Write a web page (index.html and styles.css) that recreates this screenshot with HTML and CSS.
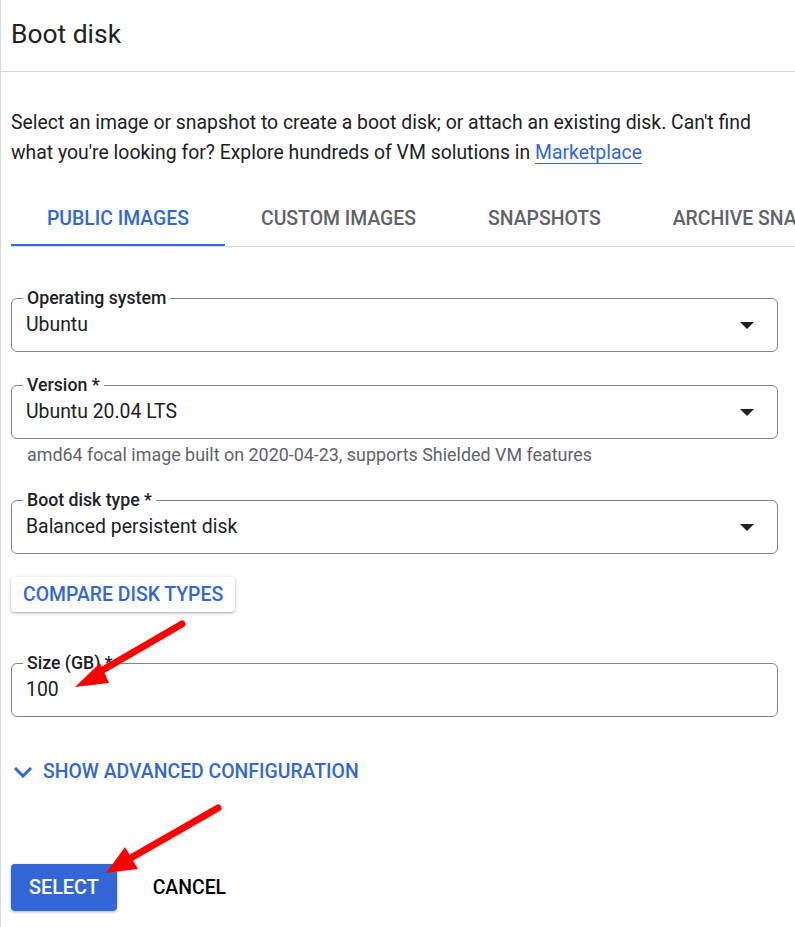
FILE: index.html
```html
<!DOCTYPE html>
<html lang="en">
<head>
<meta charset="utf-8">
<title>Boot disk</title>
<link rel="stylesheet" href="styles.css">
</head>
<body>
<div class="page">
  <header class="header">
    <h1 class="title">Boot disk</h1>
  </header>
  <main class="content">
    <p class="intro">Select an image or snapshot to create a boot disk; or attach an existing disk. Can't find what you're looking for? Explore hundreds of VM solutions in <a class="link" href="#">Marketplace</a></p>

    <nav class="tabs">
      <div class="tab active">PUBLIC IMAGES</div>
      <div class="tab">CUSTOM IMAGES</div>
      <div class="tab">SNAPSHOTS</div>
      <div class="tab">ARCHIVE SNAPSHOTS</div>
      <div class="tab">EXISTING DISKS</div>
    </nav>

    <fieldset class="field field-first">
      <legend class="field-label">Operating system</legend>
      <div class="field-row">
        <span class="field-value">Ubuntu</span>
        <svg class="caret" width="14" height="7" viewBox="0 0 14 7"><path d="M0 0H14L7 7Z" fill="#202124"/></svg>
      </div>
    </fieldset>

    <fieldset class="field field-gap">
      <legend class="field-label">Version *</legend>
      <div class="field-row">
        <span class="field-value">Ubuntu 20.04 LTS</span>
        <svg class="caret" width="14" height="7" viewBox="0 0 14 7"><path d="M0 0H14L7 7Z" fill="#202124"/></svg>
      </div>
    </fieldset>
    <div class="hint">amd64 focal image built on 2020-04-23, supports Shielded VM features</div>

    <fieldset class="field field-after-hint">
      <legend class="field-label">Boot disk type *</legend>
      <div class="field-row">
        <span class="field-value">Balanced persistent disk</span>
        <svg class="caret" width="14" height="7" viewBox="0 0 14 7"><path d="M0 0H14L7 7Z" fill="#202124"/></svg>
      </div>
    </fieldset>

    <div class="raised-row">
      <button class="btn-raised">COMPARE DISK TYPES</button>
    </div>

    <fieldset class="field field-size">
      <legend class="field-label">Size (GB) *</legend>
      <div class="field-row">
        <span class="field-value">100</span>
      </div>
    </fieldset>

    <div class="advanced">
      <svg class="chevron" width="20" height="12" viewBox="0 0 20 12"><path d="M2 2L10 10L18 2" fill="none" stroke="#3367d6" stroke-width="3"/></svg>
      <span>SHOW ADVANCED CONFIGURATION</span>
    </div>

    <div class="actions">
      <button class="btn-primary">SELECT</button>
      <button class="btn-text">CANCEL</button>
    </div>
  </main>

  <svg class="annotations" width="795" height="927" viewBox="0 0 795 927">
    <line x1="181" y1="624" x2="100" y2="671" stroke="#ff0000" stroke-width="7" stroke-linecap="round"/>
    <polygon points="74,687 99,663 108,683" fill="#ff0000"/>
    <line x1="217" y1="808" x2="128" y2="859" stroke="#ff0000" stroke-width="7" stroke-linecap="round"/>
    <polygon points="105,873 124,847 137,869" fill="#ff0000"/>
  </svg>
</div>
</body>
</html>
```

FILE: styles.css
```css
* { box-sizing: border-box; }

html, body {
  margin: 0;
  padding: 0;
  background: #ffffff;
}

body {
  font-family: Roboto, "Liberation Sans", Arial, sans-serif;
  color: #202124;
}

.page {
  position: relative;
  width: 795px;
  height: 927px;
  overflow: hidden;
  border-left: 1px solid #dadce0;
}

.header {
  padding: 18px 0 21px 10px;
  border-bottom: 1px solid #dadce0;
}

.title {
  margin: 0;
  font-size: 26.4px;
  line-height: 32px;
  font-weight: 400;
  color: #202124;
}

.content {
  padding-left: 10px;
}

.intro {
  margin: 36px 17px 0 0;
  font-size: 19.4px;
  line-height: 30px;
  color: #202124;
}

.link {
  color: #3367d6;
  text-decoration: underline;
  text-underline-offset: 4px;
  text-decoration-thickness: 1px;
}

.tabs {
  display: flex;
  margin-top: 28px;
  white-space: nowrap;
  overflow: hidden;
  border-bottom: 1px solid #dadce0;
}

.tab {
  flex: none;
  padding: 11px 36px 13px;
  font-size: 19.4px;
  line-height: 24px;
  font-weight: 500;
  color: #5f6368;
  border-bottom: 3px solid transparent;
  margin-bottom: -1px;
}

.tab.active {
  color: #3367d6;
  border-bottom-color: #3367d6;
}

.field {
  margin: 0 17px 0 0;
  min-width: 0;
  padding: 5px 14px 14px 14px;
  border: 1px solid #80868b;
  border-radius: 6px;
}

.field-first { margin-top: 41px; }
.field-gap { margin-top: 23px; }
.field-after-hint { margin-top: 25px; }
.field-size { margin-top: 41px; }

.field-label {
  padding: 0 4px;
  margin-left: -3px;
  font-size: 17.7px;
  line-height: 20px;
  font-weight: 500;
  color: #202124;
}

.field-row {
  display: flex;
  align-items: center;
  height: 24px;
}

.field-value {
  flex: 1;
  font-size: 19.4px;
  line-height: 24px;
  color: #202124;
}

.caret {
  flex: none;
  margin-right: 9px;
}

.hint {
  margin-top: 6px;
  padding-left: 16px;
  font-size: 17.9px;
  line-height: 20px;
  color: #5f6368;
}

.raised-row {
  display: flex;
  margin-top: 23px;
}

.btn-raised {
  height: 35px;
  padding: 0 12px;
  border: none;
  border-radius: 4px;
  background: #ffffff;
  box-shadow: 0 1px 2px rgba(60, 64, 67, 0.3), 0 1px 4px rgba(60, 64, 67, 0.2);
  font-family: inherit;
  font-size: 19.4px;
  font-weight: 500;
  color: #3367d6;
}

.advanced {
  display: flex;
  align-items: center;
  gap: 10px;
  margin-top: 43px;
  padding-left: 2px;
  font-size: 19.4px;
  line-height: 24px;
  font-weight: 500;
  color: #3367d6;
}

.chevron { flex: none; }

.actions {
  display: flex;
  align-items: center;
  gap: 18px;
  margin-top: 80px;
}

.btn-primary {
  height: 47px;
  padding: 0 18px;
  border: none;
  border-radius: 4px;
  background: #3367d6;
  box-shadow: 0 1px 3px rgba(60, 64, 67, 0.4);
  font-family: inherit;
  font-size: 19.8px;
  font-weight: 500;
  color: #ffffff;
}

.btn-text {
  height: 47px;
  padding: 0 18px;
  border: none;
  background: transparent;
  font-family: inherit;
  font-size: 19.4px;
  font-weight: 500;
  color: #000000;
}

.annotations {
  position: absolute;
  top: 0;
  left: 0;
  pointer-events: none;
}
```
